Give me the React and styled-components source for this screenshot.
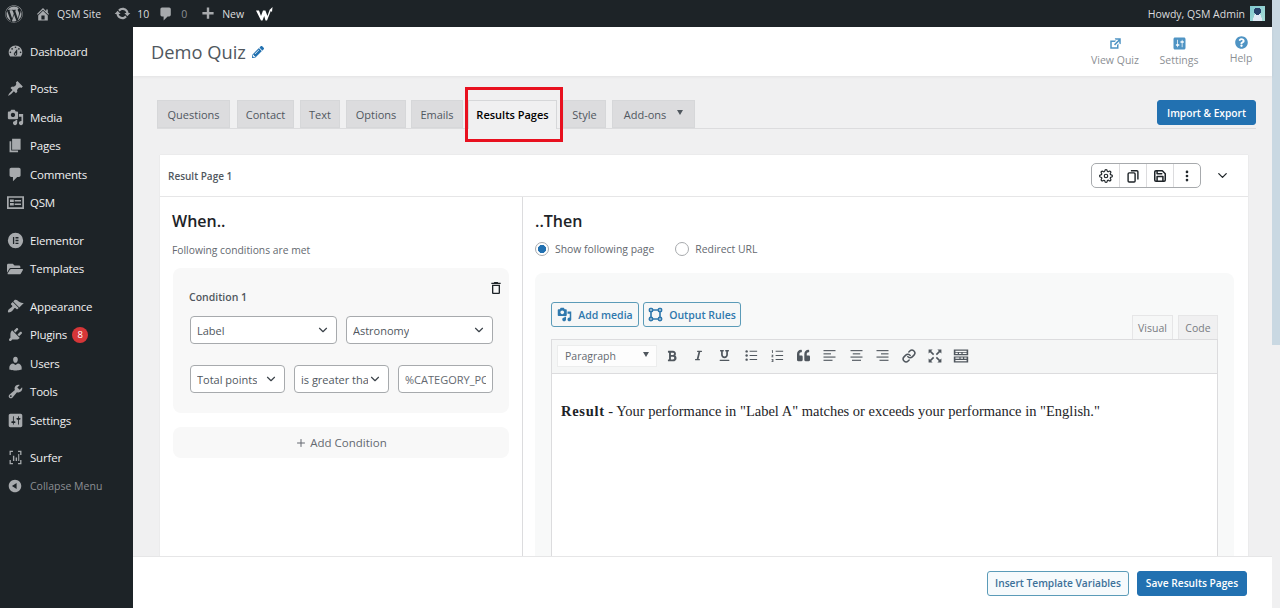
import React from 'react'
import styled, { createGlobalStyle } from 'styled-components'
import { FaWordpress, FaPencilAlt, FaQuestionCircle, FaBold, FaItalic, FaUnderline, FaQuoteLeft, FaFolderOpen } from 'react-icons/fa'
import { FiSettings, FiMoreVertical, FiChevronDown, FiPlus, FiLink, FiSave } from 'react-icons/fi'
import { MdOutlineDeleteOutline } from 'react-icons/md'

const dash = {
  dashboard: 'M3.76 16h12.48c1.1-1.37 1.76-3.11 1.76-5 0-4.42-3.58-8-8-8s-8 3.58-8 8c0 1.89.66 3.63 1.76 5zM10 4c.55 0 1 .45 1 1s-.45 1-1 1-1-.45-1-1 .45-1 1-1zM6 6c.55 0 1 .45 1 1s-.45 1-1 1-1-.45-1-1 .45-1 1-1zm8 0c.55 0 1 .45 1 1s-.45 1-1 1-1-.45-1-1 .45-1 1-1zm-5.37 5.55L12 7v6c0 1.1-.9 2-2 2s-2-.9-2-2c0-.57.24-1.08.63-1.45zM4 10c.55 0 1 .45 1 1s-.45 1-1 1-1-.45-1-1 .45-1 1-1zm12 0c.55 0 1 .45 1 1s-.45 1-1 1-1-.45-1-1 .45-1 1-1zm-5 3c0-.55-.45-1-1-1s-1 .45-1 1 .45 1 1 1 1-.45 1-1z',
  post: 'M10.44 3.02l1.82-1.82 6.36 6.35-1.83 1.82c-1.05-.68-2.48-.57-3.41.36l-.75.75c-.92.93-1.04 2.35-.35 3.41l-1.83 1.82-2.41-2.41-2.8 2.79c-.42.42-3.38 2.71-3.8 2.29s1.86-3.39 2.28-3.81l2.79-2.79L4.1 9.36l1.83-1.82c1.05.69 2.48.57 3.4-.36l.75-.75c.93-.92 1.05-2.35.36-3.41z',
  media: 'M13 11V4c0-.55-.45-1-1-1h-1.67L9 1H5L3.67 3H2c-.55 0-1 .45-1 1v7c0 .55.45 1 1 1h10c.55 0 1-.45 1-1zM7 4.5c1.38 0 2.5 1.12 2.5 2.5S8.38 9.5 7 9.5 4.5 8.38 4.5 7 5.62 4.5 7 4.5zM14 6h5v10.5c0 1.38-1.12 2.5-2.5 2.5S14 17.88 14 16.5s1.12-2.5 2.5-2.5c.17 0 .34.02.5.05V9h-3V6zm-4 8.05V13h2v3.5c0 1.38-1.12 2.5-2.5 2.5S7 17.88 7 16.5 8.12 14 9.5 14c.17 0 .34.02.5.05z',
  page: 'M6 15V2h10v13H6zm-1 1h8v2H3V5h2v11z',
  comment: 'M5 2h9c1.1 0 2 .9 2 2v7c0 1.1-.9 2-2 2h-2l-5 5v-5H5c-1.1 0-2-.9-2-2V4c0-1.1.9-2 2-2z',
  qsm: 'M0 2.500h20v15H0v-15zm2 2v11h16v-11H2zm1.500 2H8V9.500H3.500v-3zm5.500 .500h7.500v1.800H9V7zM3.500 10.500H8v3H3.500v-3zm5.500 .700h7.500V13H9v-1.800z',
  elementor: 'M10 1a9 9 0 1 0 0 18 9 9 0 0 0 0-18zM7 6h1.5v8H7V6zm3 0h3.5v1.5H10V6zm0 3.25h3.5v1.5H10v-1.5zm0 3.25h3.5V14H10v-1.5z',
  appearance: 'M14.48 11.06L7.41 3.99l1.5-1.5c.5-.56 2.3-.47 3.51.32 1.21.8 1.43 1.28 2.91 2.1 1.18.64 2.45 1.26 4.45.85zm-.71.71L6.7 4.7 4.93 6.47c-.39.39-.39 1.02 0 1.41l1.06 1.06c.39.39.39 1.03 0 1.42-.6.6-1.43 1.11-2.21 1.69-.35.26-.7.53-1.01.84C1.43 13.23.78 15.58 1.2 16.8c1.22.42 3.57-.23 4.93-1.59.31-.31.58-.66.84-1.01.58-.78 1.09-1.61 1.69-2.21.39-.39 1.03-.39 1.42 0l1.06 1.06c.39.39 1.02.39 1.41 0z',
  plugin: 'M13.11 4.36L9.87 7.6 8 5.73l3.24-3.24c.35-.34 1.05-.2 1.56.32.52.51.66 1.21.31 1.55zm-8 1.77l.91-1.12 9.01 9.01-1.19.84c-.71.71-2.63 1.16-3.82 1.16H6.14L4.9 17.26c-.59.59-1.54.59-2.12 0-.59-.58-.59-1.53 0-2.12l1.24-1.24v-3.88c0-1.13.4-3.19 1.09-3.89zm7.26 3.97l3.24-3.24c.34-.35 1.04-.21 1.55.31.52.51.66 1.21.31 1.55l-3.24 3.25z',
  users: 'M10 9.25c-2.27 0-2.73-3.44-2.73-3.44C7 4.02 7.82 2 9.97 2c2.16 0 2.98 2.02 2.71 3.81 0 0-.41 3.44-2.68 3.44zm0 2.57L12.72 10c2.39 0 4.52 2.33 4.52 4.53v2.49s-3.65 1.13-7.24 1.13c-3.65 0-7.24-1.13-7.24-1.13v-2.49c0-2.25 1.94-4.48 4.47-4.48z',
  tools: 'M16.68 9.77c-1.34 1.34-3.3 1.67-4.95.99l-5.41 6.52c-.99.99-2.59.99-3.58 0s-.99-2.59 0-3.57l6.52-5.42c-.68-1.65-.35-3.61.99-4.95 1.28-1.28 3.12-1.62 4.72-1.06l-2.89 2.89 2.82 2.82 2.86-2.87c.53 1.58.18 3.39-1.08 4.65zM3.81 16.21c.4.39 1.04.39 1.43 0 .4-.4.4-1.04 0-1.43-.39-.4-1.03-.4-1.43 0-.39.39-.39 1.03 0 1.43z',
  settings: 'M18 16V4c0-1.1-.9-2-2-2H4c-1.1 0-2 .9-2 2v12c0 1.1.9 2 2 2h12c1.1 0 2-.9 2-2zM8 11h1c.55 0 1 .45 1 1s-.45 1-1 1H8v1.5c0 .28-.22.5-.5.5s-.5-.22-.5-.5V13H6c-.55 0-1-.45-1-1s.45-1 1-1h1V5.5c0-.28.22-.5.5-.5s.5.22.5.5V11zm5-2h-1c-.55 0-1-.45-1-1s.45-1 1-1h1V5.5c0-.28.22-.5.5-.5s.5.22.5.5V7h1c.55 0 1 .45 1 1s-.45 1-1 1h-1v5.5c0 .28-.22.5-.5.5s-.5-.22-.5-.5V9z',
  surfer: 'M3 2h4v1.5H4.5V7H3V2zm10 0h4v5h-1.5V3.5H13V2zM3 13h1.5v3.5H7V18H3v-5zm12.5 0H17v5h-4v-1.5h2.5V13zM7 8h1.6v6H7V8zm3.2 2h1.6v4h-1.6v-4zm3-4h1.2v8h-1.2V6z',
  collapse: 'M10 2.16c4.33 0 7.84 3.51 7.84 7.84s-3.51 7.84-7.84 7.84S2.16 14.33 2.16 10 5.71 2.16 10 2.16zm2 11.72V6.12L6.18 9.97z',
  home: 'M16 8.5l1.53 1.53-1.06 1.06L10 4.62l-6.47 6.47-1.06-1.06L10 2.5l4 4v-2h2v4zm-6-2.46l6 5.99V18H4v-5.97zM12 17v-5H8v5h4z',
  update: 'M10.2 3.28c3.53 0 6.43 2.61 6.92 6h2.08l-3.5 4-3.5-4h2.32c-.45-1.97-2.21-3.45-4.32-3.45-1.45 0-2.73.71-3.54 1.78L4.95 5.66C6.23 4.2 8.11 3.28 10.2 3.28zm-.4 13.44c-3.52 0-6.43-2.61-6.92-6H.8l3.5-4c1.17 1.33 2.33 2.67 3.5 4H5.48c.45 1.97 2.21 3.45 4.32 3.45 1.45 0 2.73-.71 3.54-1.78l1.71 1.95c-1.28 1.46-3.15 2.38-5.25 2.38z',
  plus: 'M17 7.5v3h-5.5V16h-3v-5.5H3v-3h5.5V2h3v5.5H17z',
  external: 'M9 3h8v8l-2-1V6.92l-5.6 5.59-1.41-1.41L14.08 5H10zm3 12v-3l2-2v7H3V6h8L9 8H5v7h7z',
}

const Dash = ({ name, size = 18 }) => (
  <svg width={size} height={size} viewBox="0 0 20 20" fill="currentColor" fillRule="evenodd"><path d={dash[name]} /></svg>
)

const menu = [
  [{ icon: 'dashboard', label: 'Dashboard' }],
  [
    { icon: 'post', label: 'Posts' },
    { icon: 'media', label: 'Media' },
    { icon: 'page', label: 'Pages' },
    { icon: 'comment', label: 'Comments' },
    { icon: 'qsm', label: 'QSM' },
  ],
  [{ icon: 'elementor', label: 'Elementor' }, { icon: 'folder', label: 'Templates' }],
  [
    { icon: 'appearance', label: 'Appearance' },
    { icon: 'plugin', label: 'Plugins', badge: 8 },
    { icon: 'users', label: 'Users' },
    { icon: 'tools', label: 'Tools' },
    { icon: 'settings', label: 'Settings' },
  ],
  [{ icon: 'surfer', label: 'Surfer' }, { icon: 'collapse', label: 'Collapse Menu', dim: true }],
]

const tabs = ['Questions', 'Contact', 'Text', 'Options', 'Emails', 'Results Pages', 'Style', 'Add-ons']

const GlobalStyle = createGlobalStyle`
  html, body { margin: 0; height: 100%; overflow: hidden; background: #f0f0f1; }
  body { font-family: "Open Sans", "Noto Sans", sans-serif; color: #3c434a; }
  * { box-sizing: border-box; }
`

const Shell = styled.div`
  display: flex;
  width: 1280px;
  height: 608px;
  overflow: hidden;
`
const Page = styled.div`
  width: 1272px;
  display: flex;
  flex-direction: column;
`
const Scrollbar = styled.div`
  width: 8px;
  background: #f0f0f1;
  &::before {
    content: '';
    display: block;
    height: 345px;
    background: #c9d8e2;
  }
`

const AdminBar = styled.header`
  height: 27px;
  flex: none;
  background: #1d2327;
  color: #c3c4c7;
  display: flex;
  align-items: center;
  font-size: 10.5px;
`
const BarItem = styled.div`
  display: flex;
  align-items: center;
  gap: ${p => p.$gap || 4}px;
  margin-left: ${p => p.$left || 0}px;
  color: ${p => p.$dim ? '#8c8f94' : '#dcdcde'};
  svg { color: #a7aaad; flex: none; }
`
const BarSpacer = styled.div`
  flex: 1;
`
const Avatar = styled.div`
  width: 15px;
  height: 15px;
  margin-left: 5px;
  margin-right: 7px;
  background: radial-gradient(circle at 50% 35%, #27406b 0 28%, transparent 30%), radial-gradient(ellipse at 50% 100%, #dfe9f5 0 40%, transparent 42%), linear-gradient(135deg, #7fc8d0, #a8dcd6);
`

const Body = styled.div`
  flex: 1;
  display: flex;
  min-height: 0;
`
const Sidebar = styled.nav`
  width: 133px;
  flex: none;
  background: #1d2327;
  padding-top: 10px;
  display: flex;
  flex-direction: column;
  gap: 9px;
`
const MenuGroup = styled.div`
  display: flex;
  flex-direction: column;
`
const MenuItem = styled.div`
  height: 28.5px;
  display: flex;
  align-items: center;
  font-size: ${p => p.$dim ? '10.5px' : '11.5px'};
  letter-spacing: ${p => p.$dim ? '0' : '-.2px'};
  color: ${p => p.$dim ? '#8c8f94' : '#f0f0f1'};
`
const MenuIcon = styled.span`
  width: 30px;
  flex: none;
  display: flex;
  justify-content: center;
  color: #a7aaad;
`
const Badge = styled.span`
  width: 16px;
  height: 16px;
  margin-left: 5px;
  border-radius: 50%;
  background: #d63638;
  color: #fff;
  font-size: 9.5px;
  display: flex;
  align-items: center;
  justify-content: center;
`

const Main = styled.main`
  flex: 1;
  min-width: 0;
  display: flex;
  flex-direction: column;
`
const TopHeader = styled.div`
  height: 49px;
  flex: none;
  background: #fff;
  display: flex;
  align-items: center;
  padding: 0 1px 0 18px;
  box-shadow: 0 1px 3px rgba(0, 0, 0, .06);
  position: relative;
`
const QuizTitle = styled.h1`
  margin: 0;
  font-size: 18.3px;
  font-weight: 400;
  color: #50575e;
  display: flex;
  align-items: center;
  gap: 6px;
  svg { color: #2271b1; }
`
const HeaderActions = styled.div`
  margin-left: auto;
  display: flex;
`
const HeaderAction = styled.div`
  width: ${p => p.$w}px;
  display: flex;
  flex-direction: column;
  align-items: center;
  gap: 2px;
  font-size: 10.5px;
  color: #8c8f94;
  svg { color: #4f94c4; }
`

const Content = styled.div`
  flex: 1;
  min-height: 0;
  overflow: hidden;
  padding: 24px 16px 0 24px;
`
const TabRow = styled.div`
  height: 29px;
  display: flex;
  align-items: flex-start;
  justify-content: space-between;
  border-bottom: 1px solid #dcdcde;
`
const Tabs = styled.div`
  display: flex;
  height: 29px;
`
const Tab = styled.div`
  position: relative;
  width: ${p => p.$w}px;
  margin-right: ${p => p.$gap}px;
  height: ${p => p.$active ? 29 : 28}px;
  padding-bottom: ${p => p.$active ? 1 : 0}px;
  display: flex;
  align-items: center;
  justify-content: center;
  gap: 11px;
  font-size: 11px;
  color: ${p => p.$active ? '#000' : '#50575e'};
  font-weight: ${p => p.$active ? 600 : 400};
  background: ${p => p.$active ? '#f0f0f1' : '#dcdcde'};
  border: 1px solid #d6d7d9;
  border-bottom: ${p => p.$active ? 'none' : '1px solid #d6d7d9'};
`
const Highlight = styled.span`
  position: absolute;
  left: -4px;
  right: -7px;
  top: -14px;
  bottom: -13px;
  border: 3.5px solid #e8101f;
  pointer-events: none;
`
const Caret = styled.span`
  width: 0;
  height: 0;
  border-left: 3.5px solid transparent;
  border-right: 3.5px solid transparent;
  border-top: 5px solid #50575e;
  margin-top: -3px;
`
const Button = styled.button`
  height: 25px;
  width: ${p => p.$w}px;
  padding: 0;
  font: 600 10.2px "Open Sans", sans-serif;
  border-radius: 3px;
  border: 1px solid ${p => p.$outline ? '#5b9bb8' : '#2271b1'};
  background: ${p => p.$outline ? '#f6fafc' : '#2271b1'};
  color: ${p => p.$outline ? '#3d7199' : '#fff'};
`

const Card = styled.section`
  margin: 26px 8px 0 3px;
  background: #fff;
  box-shadow: 0 0 1px rgba(0, 0, 0, .12);
`
const CardHead = styled.div`
  height: 42px;
  display: flex;
  align-items: center;
  padding: 0 18px 0 8px;
  border-bottom: 1px solid #e6e6e7;
  font-size: 10px;
  font-weight: 600;
  color: #50575e;
`
const ToolGroup = styled.div`
  margin-left: auto;
  height: 25px;
  width: 110px;
  display: grid;
  grid-template-columns: repeat(4, 1fr);
  border: 1px solid #a7aaad;
  border-radius: 5px;
`
const ToolBtn = styled.div`
  display: flex;
  align-items: center;
  justify-content: center;
  color: #1d2327;
  border-left: ${p => p.$first ? 'none' : '1px solid #dcdcde'};
`
const CardChevron = styled.div`
  margin-left: 14px;
  display: flex;
  color: #1d2327;
`
const Columns = styled.div`
  display: flex;
  height: 370px;
`
const WhenCol = styled.div`
  width: 363px;
  flex: none;
  padding: 14px 13px 0 12px;
  border-right: 1px solid #dcdcde;
`
const ThenCol = styled.div`
  flex: 1;
  padding: 14px 14px 0 12px;
  min-width: 0;
`
const ColTitle = styled.h2`
  margin: 0;
  font-size: 16px;
  line-height: 20px;
  font-weight: 600;
  color: #1d2327;
`
const Hint = styled.p`
  margin: 12px 0 0;
  font-size: 10.3px;
  line-height: 14px;
  color: #646970;
`
const Condition = styled.div`
  position: relative;
  margin: 11px 0 0 1px;
  height: 145px;
  background: #f8f8f8;
  border-radius: 8px;
  padding: 22px 16px 0 17px;
`
const CondTitle = styled.div`
  margin-left: -1px;
  font-size: 10.5px;
  font-weight: 600;
  line-height: 14px;
  color: #50575e;
`
const Trash = styled.div`
  position: absolute;
  right: 5px;
  top: 12px;
  display: flex;
  color: #1d2327;
`
const FieldRow = styled.div`
  margin-top: ${p => p.$top}px;
  display: grid;
  grid-template-columns: ${p => p.$cols};
  gap: 9px;
`
const Select = styled.div`
  height: 28px;
  padding: 0 6px 0 6px;
  background: #fff;
  border: 1px solid #a7aaad;
  border-radius: 4px;
  display: flex;
  align-items: center;
  justify-content: space-between;
  font-size: 11px;
  color: #50575e;
  span { overflow: hidden; white-space: nowrap; }
  svg { flex: none; color: #3c434a; }
`
const Input = styled.input`
  height: 28px;
  width: 95px;
  padding: 0 6px;
  background: #fff;
  border: 1px solid #a7aaad;
  border-radius: 4px;
  font: 11px "Open Sans", sans-serif;
  color: #646970;
`
const AddCondition = styled.div`
  margin: 14px 0 0 1px;
  height: 31px;
  border-radius: 8px;
  background: #f8f8f8;
  display: flex;
  align-items: center;
  justify-content: center;
  gap: 3px;
  font-size: 11.5px;
  color: #646970;
`
const RadioRow = styled.div`
  margin-top: 9px;
  display: flex;
  align-items: center;
  height: 17px;
  font-size: 10.4px;
  color: #646970;
`
const Radio = styled.span`
  width: 14px;
  height: 14px;
  border-radius: 50%;
  margin-right: 6px;
  background: ${p => p.$on ? 'radial-gradient(circle, #2271b1 0 3.8px, #fff 4.4px)' : '#fff'};
  border: 1px solid #a7aaad;
`
const RadioLabel = styled.span`
  margin-right: ${p => p.$gap || 0}px;
`
const EditorPanel = styled.div`
  margin-top: 16px;
  background: #f8f9f9;
  border-radius: 8px 8px 0 0;
  padding: 29px 16px 0 16px;
  height: 290px;
`
const EditorTop = styled.div`
  height: 37px;
  display: flex;
  align-items: flex-start;
`
const MediaBtn = styled.div`
  height: 25px;
  width: ${p => p.$w}px;
  margin-right: 4px;
  display: flex;
  align-items: center;
  justify-content: center;
  gap: 6px;
  border: 1px solid #5b9bb8;
  border-radius: 3px;
  background: #f6f7f7;
  color: #2f78ad;
  font-size: 10.5px;
  font-weight: 600;
`
const ModeTabs = styled.div`
  margin-left: auto;
  margin-top: 13px;
  display: flex;
  gap: 5px;
`
const ModeTab = styled.div`
  height: 24px;
  width: ${p => p.$w}px;
  display: flex;
  align-items: center;
  justify-content: center;
  font-size: 10.5px;
  color: #787c82;
  background: ${p => p.$active ? '#f6f7f7' : '#f0f0f1'};
  border: 1px solid #e6e6e7;
  border-bottom: none;
`
const Editor = styled.div`
  border: 1px solid #dcdcde;
  background: #fff;
  height: 300px;
`
const Toolbar = styled.div`
  height: 34px;
  background: #f5f6f6;
  border-bottom: 1px solid #dcdcde;
  display: flex;
  align-items: center;
  padding: 0 0 2px 5px;
`
const FormatSelect = styled.div`
  width: 100px;
  height: 22px;
  padding: 0 7px;
  display: flex;
  align-items: center;
  justify-content: space-between;
  background: #fdfdfd;
  border: 1px solid #eceded;
  font-size: 10.5px;
  color: #646970;
`
const ToolIcons = styled.div`
  margin-left: 2px;
  display: flex;
`
const ToolIcon = styled.div`
  width: 26.3px;
  height: 22px;
  display: flex;
  align-items: center;
  justify-content: center;
  color: #50575e;
`
const EditorText = styled.p`
  margin: 28px 0 0 9px;
  font: 14.5px/18px "Liberation Serif", serif;
  color: #1d2327;
  b { letter-spacing: .7px; }
`

const Footer = styled.footer`
  height: 52px;
  flex: none;
  background: #fff;
  border-top: 1px solid #e6e6e7;
  display: flex;
  align-items: center;
  justify-content: flex-end;
  gap: 8px;
  padding: 1px 25px 0 0;
`

const OutputIcon = () => (
  <svg width="15" height="15" viewBox="0 0 20 20" fill="none" stroke="currentColor" strokeWidth="2.2">
    <rect x="2" y="2" width="4" height="4" rx="1" />
    <rect x="14" y="2" width="4" height="4" rx="1" />
    <circle cx="4" cy="16" r="2.200" />
    <circle cx="16" cy="16" r="2.200" />
    <path d="M6 4h8M16 6v8M6 16h8M4 6v8" />
  </svg>
)

const CopyIcon = () => (
  <svg width="14" height="14" viewBox="0 0 20 20" fill="none" stroke="currentColor" strokeWidth="2">
    <rect x="3" y="5.500" width="10" height="13" rx="1.500" />
    <path d="M7 2.500h8.500A1.500 1.500 0 0 1 17 4v11" />
  </svg>
)

const ListBullets = () => (
  <svg width="15" height="15" viewBox="0 0 20 20" fill="currentColor">
    <circle cx="3.500" cy="4.500" r="1.600" /><circle cx="3.500" cy="10" r="1.600" /><circle cx="3.500" cy="15.500" r="1.600" />
    <path d="M7.500 3.800h10v1.300h-10zM7.500 9.300h10v1.300h-10zM7.500 14.800h10v1.300h-10z" />
  </svg>
)

const ListNumbers = () => (
  <svg width="15" height="15" viewBox="0 0 20 20" fill="currentColor">
    <path d="M2.500 3h1.500v3.500H2.900V4.200h-.4zM2 9h2.500v1L3.200 11.300h1.300v1H2v-1l1.300-1.300H2zM2 14.500h2.500v4H2v-1h1.400v-.5H2.500v-.8h.9v-.7H2z" />
    <path d="M7.500 3.800h10v1.300h-10zM7.500 9.300h10v1.300h-10zM7.500 14.800h10v1.300h-10z" />
  </svg>
)

// x1 is where each text row of an align icon starts, x2 where it stops
const AlignIcon = ({ rows }) => (
  <svg width="15" height="15" viewBox="0 0 20 20" stroke="currentColor" strokeWidth="1.500">
    {rows.map(([x1, x2], i) => <line key={i} x1={x1} x2={x2} y1={3.500 + i * 4.300} y2={3.500 + i * 4.300} />)}
  </svg>
)

const SinkIcon = () => (
  <svg width="16" height="16" viewBox="0 0 20 20" fill="currentColor">
    <path d="M1 2h18v7H1V2zm2 1.500V5h14V3.500H3zM3 6v1.500h3V6H3zm4.500 0v1.500h3V6h-3zM12 6v1.500h5V6h-5zM1 10.500h18V18H1v-7.500zM3 12v1.500h5V12H3zm6.500 0v1.500h3V12h-3zM14 12v1.500h3V12h-3zM3 15v1.500h14V15H3z" fillRule="evenodd" />
  </svg>
)

const ExpandIcon = () => (
  <svg width="16" height="16" viewBox="0 0 20 20" fill="currentColor">
    <path d="M2 2h5L5.200 3.800 9 7.600 7.600 9 3.800 5.200 2 7V2zm16 0v5l-1.800-1.800L12.400 9 11 7.600l3.800-3.800L13 2h5zM2 18v-5l1.800 1.800L7.600 11 9 12.400l-3.800 3.800L7 18H2zm16 0h-5l1.800-1.800-3.800-3.800 1.400-1.400 3.800 3.800L18 13v5z" />
  </svg>
)

const WLogo = () => (
  <svg width="18" height="14" viewBox="0 0 18 14" fill="#fff">
    <path d="M0 3.500h3l2 5.500 2-5.500h2.400l2 5.500 2.400-6.500L13 3.500 16.500 0 16 5l-1.200-1L11 13.500H9.500L8.200 9 6.500 13.500H5z" />
  </svg>
)

const editorIcons = [
  <FaBold size={12} />, <FaItalic size={11} />, <FaUnderline size={11} />, <ListBullets />, <ListNumbers />,
  <FaQuoteLeft size={13} />,
  <AlignIcon rows={[[2, 18], [2, 12], [2, 18], [2, 14]]} />,
  <AlignIcon rows={[[2, 18], [5, 15], [2, 18], [4, 16]]} />,
  <AlignIcon rows={[[2, 18], [8, 18], [2, 18], [6, 18]]} />,
  <FiLink size={14} strokeWidth={2.6} />, <ExpandIcon />, <SinkIcon />,
]

const tabSizes = [
  [73, 7], [57, 6], [40, 6], [60, 5], [52, 5], [89, 6], [43, 6], [83, 0],
]

export default function App() {
  return (
    <Shell>
      <GlobalStyle />
      <Page>
        <AdminBar>
          <BarItem $left={5}><FaWordpress size={18} /></BarItem>
          <BarItem $left={12} $gap={6}><Dash name="home" size={16} />QSM Site</BarItem>
          <BarItem $left={13} $gap={6}><Dash name="update" size={17} />10</BarItem>
          <BarItem $left={9} $gap={7} $dim><Dash name="comment" size={16} />0</BarItem>
          <BarItem $left={13} $gap={6}><Dash name="plus" size={16} />New</BarItem>
          <BarItem $left={12}><WLogo /></BarItem>
          <BarSpacer />
          <BarItem>Howdy, QSM Admin</BarItem>
          <Avatar />
        </AdminBar>
        <Body>
          <Sidebar>
            {menu.map((group, i) => (
              <MenuGroup key={i}>
                {group.map(item => (
                  <MenuItem key={item.label} $dim={item.dim}>
                    <MenuIcon>
                      {item.icon === 'folder' ? <FaFolderOpen size={16} /> : <Dash name={item.icon} size={item.dim ? 16 : 17} />}
                    </MenuIcon>
                    {item.label}
                    {item.badge && <Badge>{item.badge}</Badge>}
                  </MenuItem>
                ))}
              </MenuGroup>
            ))}
          </Sidebar>
          <Main>
            <TopHeader>
              <QuizTitle>Demo Quiz <FaPencilAlt size={12} /></QuizTitle>
              <HeaderActions>
                <HeaderAction $w={64}><Dash name="external" size={15} />View Quiz</HeaderAction>
                <HeaderAction $w={64}><Dash name="settings" size={15} />Settings</HeaderAction>
                <HeaderAction $w={60}><FaQuestionCircle size={13} />Help</HeaderAction>
              </HeaderActions>
            </TopHeader>
            <Content>
              <TabRow>
                <Tabs>
                  {tabs.map((t, i) => (
                    <Tab key={t} $w={tabSizes[i][0]} $gap={tabSizes[i][1]} $active={t === 'Results Pages'}>
                      {t}
                      {t === 'Add-ons' && <Caret />}
                      {t === 'Results Pages' && <Highlight />}
                    </Tab>
                  ))}
                </Tabs>
                <Button $w={99}>Import &amp; Export</Button>
              </TabRow>
              <Card>
                <CardHead>
                  Result Page 1
                  <ToolGroup>
                    <ToolBtn $first><FiSettings size={14} /></ToolBtn>
                    <ToolBtn><CopyIcon /></ToolBtn>
                    <ToolBtn><FiSave size={14} strokeWidth={2.6} /></ToolBtn>
                    <ToolBtn><FiMoreVertical size={14} strokeWidth={2.6} /></ToolBtn>
                  </ToolGroup>
                  <CardChevron><FiChevronDown size={15} /></CardChevron>
                </CardHead>
                <Columns>
                  <WhenCol>
                    <ColTitle>When..</ColTitle>
                    <Hint>Following conditions are met</Hint>
                    <Condition>
                      <Trash><MdOutlineDeleteOutline size={16} /></Trash>
                      <CondTitle>Condition 1</CondTitle>
                      <FieldRow $top={12} $cols="147px 147px">
                        <Select><span>Label</span><FiChevronDown size={14} /></Select>
                        <Select><span>Astronomy</span><FiChevronDown size={14} /></Select>
                      </FieldRow>
                      <FieldRow $top={21} $cols="95px 95px 95px">
                        <Select><span>Total points</span><FiChevronDown size={14} /></Select>
                        <Select><span>is greater than</span><FiChevronDown size={14} /></Select>
                        <Input readOnly value="%CATEGORY_POINTS%" />
                      </FieldRow>
                    </Condition>
                    <AddCondition><FiPlus size={12} /> Add Condition</AddCondition>
                  </WhenCol>
                  <ThenCol>
                    <ColTitle>..Then</ColTitle>
                    <RadioRow>
                      <Radio $on />
                      <RadioLabel $gap={21}>Show following page</RadioLabel>
                      <Radio />
                      <RadioLabel>Redirect URL</RadioLabel>
                    </RadioRow>
                    <EditorPanel>
                      <EditorTop>
                        <MediaBtn $w={88}><Dash name="media" size={15} />Add media</MediaBtn>
                        <MediaBtn $w={98}><OutputIcon />Output Rules</MediaBtn>
                        <ModeTabs>
                          <ModeTab $w={41} $active>Visual</ModeTab>
                          <ModeTab $w={40}>Code</ModeTab>
                        </ModeTabs>
                      </EditorTop>
                      <Editor>
                        <Toolbar>
                          <FormatSelect>Paragraph<Caret /></FormatSelect>
                          <ToolIcons>
                            {editorIcons.map((icon, i) => <ToolIcon key={i}>{icon}</ToolIcon>)}
                          </ToolIcons>
                        </Toolbar>
                        <EditorText><b>Result</b> - Your performance in "Label A" matches or exceeds your performance in "English."</EditorText>
                      </Editor>
                    </EditorPanel>
                  </ThenCol>
                </Columns>
              </Card>
            </Content>
            <Footer>
              <Button $outline $w={142}>Insert Template Variables</Button>
              <Button $w={110}>Save Results Pages</Button>
            </Footer>
          </Main>
        </Body>
      </Page>
      <Scrollbar />
    </Shell>
  )
}
